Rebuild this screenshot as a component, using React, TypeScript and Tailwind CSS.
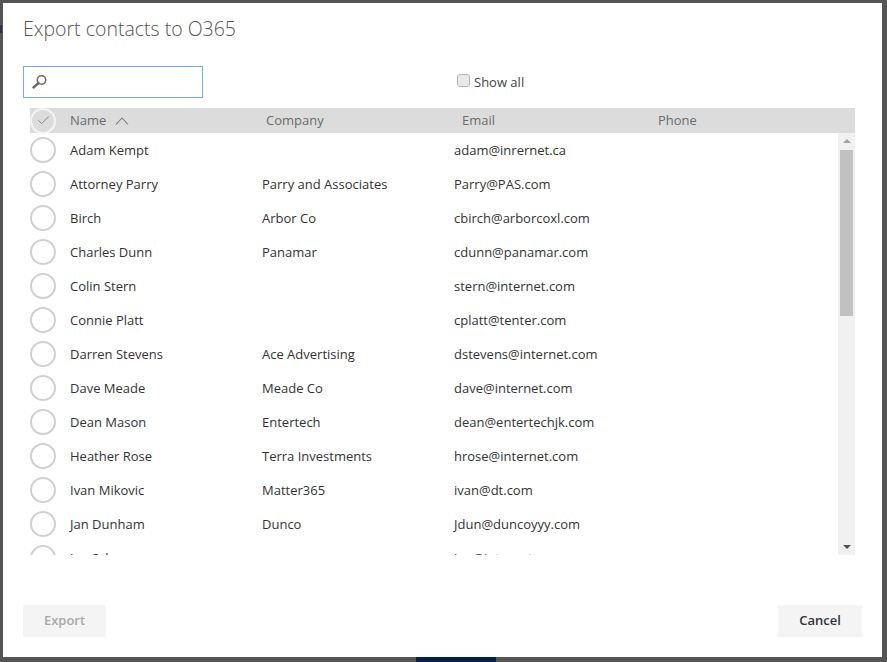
import React from "react";
import { Check } from "lucide-react";

const contacts = [
  { name: "Adam Kempt", company: "", email: "adam@inrernet.ca" },
  { name: "Attorney Parry", company: "Parry and Associates", email: "Parry@PAS.com" },
  { name: "Birch", company: "Arbor Co", email: "cbirch@arborcoxl.com" },
  { name: "Charles Dunn", company: "Panamar", email: "cdunn@panamar.com" },
  { name: "Colin Stern", company: "", email: "stern@internet.com" },
  { name: "Connie Platt", company: "", email: "cplatt@tenter.com" },
  { name: "Darren Stevens", company: "Ace Advertising", email: "dstevens@internet.com" },
  { name: "Dave Meade", company: "Meade Co", email: "dave@internet.com" },
  { name: "Dean Mason", company: "Entertech", email: "dean@entertechjk.com" },
  { name: "Heather Rose", company: "Terra Investments", email: "hrose@internet.com" },
  { name: "Ivan Mikovic", company: "Matter365", email: "ivan@dt.com" },
  { name: "Jan Dunham", company: "Dunco", email: "Jdun@duncoyyy.com" },
  { name: "Joe Sch", company: "", email: "joe@internet.com" },
];

const Row = ({ name, company, email }: { name: string; company: string; email: string }) => (
  <div className="flex h-[34px] shrink-0 items-center text-[13px] text-[#333333]">
    <div className="h-[26px] w-[26px] rounded-full border-2 border-[#d0d0d0]" />
    <div className="mt-[2px] ml-[14px] w-[192px]">{name}</div>
    <div className="mt-[2px] w-[192px]">{company}</div>
    <div className="mt-[2px] w-[192px]">{email}</div>
  </div>
);

const App = () => {
  return (
    <div className="relative h-[662px] w-[887px] overflow-hidden bg-[#555555] p-[3px] font-['Open_Sans','Noto_Sans',sans-serif]">
      <div className="flex h-[654px] w-[879px] flex-col bg-white pl-5">
        <h1 className="mt-[10px] h-[32px] text-[19.5px] leading-[32px] font-light text-[#555555]">
          Export contacts to O365
        </h1>
        <div className="mt-[21px] flex h-[32px] items-center">
          <div className="flex h-[32px] w-[180px] items-center border border-[#6fb0e6] pl-2">
            <svg width="16" height="16" viewBox="0 0 16 16" fill="none">
              <circle cx="9.5" cy="6" r="4.2" stroke="#6b6b6b" strokeWidth="1.6" />
              <path d="M6.5 9L1.5 13.5" stroke="#7a6a5a" strokeWidth="2.4" strokeLinecap="round" />
            </svg>
          </div>
          <div className="mb-[3px] ml-[254px] h-[13px] w-[13px] rounded-[3px] border border-[#b5b5b5] bg-[#e9e9e9]" />
          <span className="mt-[2px] ml-[4px] text-[13px] text-[#444444]">Show all</span>
        </div>
        <div className="mt-[10px] ml-[7px] flex w-[825px] flex-col">
          <div className="flex h-[25px] items-center bg-[#dcdcdc] text-[13px] text-[#6b6b6b]">
            <div className="flex h-[26px] w-[26px] items-center justify-center rounded-full border-2 border-[#f4f4f4]">
              <Check size={15} strokeWidth={1.2} className="text-[#6e6e6e]" />
            </div>
            <div className="ml-[14px] flex w-[196px] items-center gap-[9px]">
              Name
              <svg width="14" height="8" viewBox="0 0 14 8" fill="none">
                <path d="M1 7.5L7 1L13 7.5" stroke="#777777" strokeWidth="1.1" />
              </svg>
            </div>
            <div className="w-[196px]">Company</div>
            <div className="w-[196px]">Email</div>
            <div>Phone</div>
          </div>
          <div className="flex h-[422px]">
            <div className="flex h-full flex-1 flex-col overflow-hidden">
              {contacts.map((c) => (
                <Row key={c.name} {...c} />
              ))}
            </div>
            <div className="flex h-full w-[17px] flex-col items-center bg-[#f1f1f1]">
              <div className="mt-[6px] h-0 w-0 border-x-[4px] border-b-[4px] border-x-transparent border-b-[#a3a3a3]" />
              <div className="mt-[7px] h-[166px] w-[13px] bg-[#c1c1c1]" />
              <div className="mt-auto mb-[6px] h-0 w-0 border-x-[4px] border-t-[4px] border-x-transparent border-t-[#505050]" />
            </div>
          </div>
        </div>
        <div className="mt-[50px] flex w-[839px] items-center justify-between">
          <button className="h-8 w-[83px] bg-[#f4f4f4] text-[13px] font-semibold text-[#a8a8a8]">Export</button>
          <button className="h-8 w-[84px] bg-[#f4f4f4] text-[13px] font-semibold text-[#333333]">Cancel</button>
        </div>
      </div>
      <div className="absolute top-[25px] left-0 h-[8px] w-[2px] bg-[#2f3450]" />
      <div className="absolute bottom-0 left-[416px] h-[5px] w-[80px] bg-[#002050]" />
    </div>
  );
};

export default App;
